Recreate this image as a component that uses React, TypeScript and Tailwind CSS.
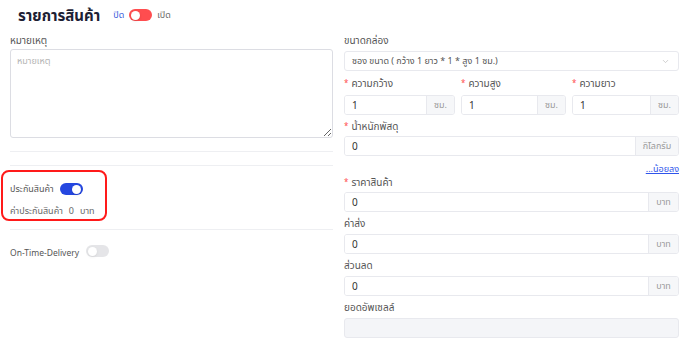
import { ChevronDown } from 'lucide-react';

function Toggle({ on, color }: { on: boolean; color: string }) {
  return (
    <span className={`relative inline-flex h-[12px] w-[23px] items-center rounded-full ${color}`}>
      <span
        className={`absolute h-[9px] w-[9px] rounded-full bg-white shadow-sm ${on ? 'left-[12px]' : 'left-[2px]'}`}
      />
    </span>
  );
}

function Label({ text, required }: { text: string; required?: boolean }) {
  return (
    <div className="flex h-[14px] items-center text-[10px] text-[#555]">
      {required && <span className="mr-[3px] text-[8px] text-[#ff4d4f]">*</span>}
      {text}
    </div>
  );
}

function SuffixInput({ value, suffix, suffixW }: { value: string; suffix: string; suffixW: string }) {
  return (
    <div className="flex h-[20px] overflow-hidden rounded-[3px] border border-[#e8e9ee] text-[10px]">
      <div className="flex flex-1 items-center bg-white pl-[7px] text-[#333]">{value}</div>
      <div className={`flex items-center justify-center border-l border-[#e8e9ee] bg-[#f6f7f9] text-[9px] text-[#999] ${suffixW}`}>
        {suffix}
      </div>
    </div>
  );
}

export default function App() {
  return (
    <div className="h-[343px] w-[688px] bg-white font-['Noto_Sans','Noto_Sans_Thai',sans-serif]">
      {/* header */}
      <div className="flex h-[30px] items-center pl-[18px]">
        <h1 className="text-[15px] font-bold text-[#1c2033]">รายการสินค้า</h1>
        <span className="ml-[13px] text-[9px] text-[#3b5bdb]">ปิด</span>
        <span className="ml-[5px]">
          <Toggle on={false} color="bg-[#ff4d4f]" />
        </span>
        <span className="ml-[5px] text-[9px] text-[#666]">เปิด</span>
      </div>

      <div className="flex gap-[11px] pl-[10px] pr-[9px] pt-[3px]">
        {/* left column */}
        <div className="w-[323px]">
          <Label text="หมายเหตุ" />
          <textarea
            placeholder="หมายเหตุ"
            className="mt-[2px] block h-[89px] w-full rounded-[3px] border border-[#dcdde3] px-[6px] py-[4px] text-[9px] placeholder:text-[#b5b5b5]"
          />
          <div className="mt-[13px] border-t border-[#eeeff2]" />
          <div className="mt-[13px] border-t border-[#eeeff2]" />

          <div className="relative mt-[4px] h-[59px]">
            <div className="pointer-events-none absolute left-[-9px] top-0 h-[51px] w-[106px] rounded-[8px] border-2 border-[#ff1a1a]" />
            <div className="flex h-[14px] translate-y-[12px] items-center gap-[6px] text-[9px] text-[#555]">
              <span>ประกันสินค้า</span>
              <Toggle on color="bg-[#2547e0]" />
            </div>
            <div className="mt-[20px] flex h-[14px] items-center gap-[6px] text-[9px] text-[#666]">
              <span>ค่าประกันสินค้า</span>
              <span>0</span>
              <span>บาท</span>
            </div>
          </div>

          <div className="border-t border-[#eeeff2]" />
          <div className="mt-[16px] flex h-[14px] items-center gap-[7px] text-[8.5px] text-[#555]">
            <span>On-Time-Delivery</span>
            <span className="opacity-60">
              <Toggle on={false} color="bg-[#d4d5d9]" />
            </span>
          </div>
        </div>

        {/* right column */}
        <div className="flex w-[335px] flex-col">
          <Label text="ขนาดกล่อง" />
          <div className="mt-[4px] flex h-[20px] items-center justify-between rounded-[3px] border border-[#e8e9ee] pl-[7px] pr-[8px] text-[9px] text-[#555]">
            <span>ซอง ขนาด ( กว้าง 1 ยาว * 1 * สูง 1 ซม.)</span>
            <ChevronDown className="h-[9px] w-[9px] text-[#c0c0c0]" />
          </div>

          <div className="mt-[5px] flex gap-[6px]">
            <div className="w-[111px]">
              <Label text="ความกว้าง" required />
              <div className="mt-[5px]">
                <SuffixInput value="1" suffix="ซม." suffixW="w-[28px]" />
              </div>
            </div>
            <div className="w-[105px]">
              <Label text="ความสูง" required />
              <div className="mt-[5px]">
                <SuffixInput value="1" suffix="ซม." suffixW="w-[28px]" />
              </div>
            </div>
            <div className="flex-1">
              <Label text="ความยาว" required />
              <div className="mt-[5px]">
                <SuffixInput value="1" suffix="ซม." suffixW="w-[28px]" />
              </div>
            </div>
          </div>

          <div className="mt-[4px]">
            <Label text="น้ำหนักพัสดุ" required />
          </div>
          <div className="mt-[3px]">
            <SuffixInput value="0" suffix="กิโลกรัม" suffixW="w-[43px]" />
          </div>

          <div className="mt-[7px] flex h-[12px] items-center justify-end text-[9px] text-[#2f54eb] underline">
            ...น้อยลง
          </div>

          <div>
            <Label text="ราคาสินค้า" required />
          </div>
          <div className="mt-[3px]">
            <SuffixInput value="0" suffix="บาท" suffixW="w-[30px]" />
          </div>

          <div className="mt-[4px]">
            <Label text="ค่าส่ง" />
          </div>
          <div className="mt-[4px]">
            <SuffixInput value="0" suffix="บาท" suffixW="w-[30px]" />
          </div>

          <div className="mt-[4px]">
            <Label text="ส่วนลด" />
          </div>
          <div className="mt-[4px]">
            <SuffixInput value="0" suffix="บาท" suffixW="w-[30px]" />
          </div>

          <div className="mt-[4px]">
            <Label text="ยอดอัพเซลล์" />
          </div>
          <div className="mt-[4px] h-[20px] rounded-[3px] border border-[#e8e9ee] bg-[#f4f5f8]" />
        </div>
      </div>
    </div>
  );
}
